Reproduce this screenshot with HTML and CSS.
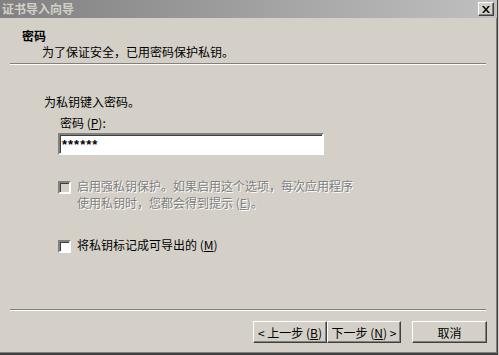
FILE: index.html
```html
<html>
<head>
    <meta charset="UTF-8"/>
    <title>证书导入向导</title>
    <link rel="stylesheet" href="styles.css">
</head>
<body>
<div class="window">
    <div class="titlebar">
        <span class="title">证书导入向导</span>
        <button class="btn_close">
            <svg width="8" height="7" viewBox="0 0 8 7"><path d="M0 0h2l2 2.5L6 0h2L5 3.5 8 7H6L4 4.5 2 7H0l3-3.5z" fill="#000"/></svg>
        </button>
    </div>
    <div class="header">
        <div class="head_title">密码</div>
        <div class="head_sub">为了保证安全，已用密码保护私钥。</div>
    </div>
    <div class="sep"></div>
    <div class="content">
        <div class="prompt">为私钥键入密码。</div>
        <div class="field">
            <label class="lbl">密码 (<u>P</u>):</label>
            <div class="pwd">******</div>
        </div>
        <div class="check disabled">
            <span class="box"></span>
            <span class="check_text">启用强私钥保护。如果启用这个选项，每次应用程序<br>使用私钥时，您都会得到提示 (<u>E</u>)。</span>
        </div>
        <div class="check">
            <span class="box"></span>
            <span class="check_text">将私钥标记成可导出的 (<u>M</u>)</span>
        </div>
    </div>
    <div class="sep"></div>
    <div class="footer">
        <button class="btn">&lt; 上一步 (<u>B</u>)</button>
        <button class="btn">下一步 (<u>N</u>) &gt;</button>
        <button class="btn btn_cancel">取消</button>
    </div>
</div>
</body>
</html>
```

FILE: styles.css
```css
body {
    margin: 0;
    font-family: "Noto Sans CJK SC", "Liberation Sans", sans-serif;
    font-size: 12px;
    background: #d4d0c8;
}

.window {
    width: 497px;
    height: 353px;
    background: #d4d0c8;
    border-right: 1px solid #404040;
    border-bottom: 2px solid #404040;
    box-shadow: inset -1px -1px 0 #808080;
    display: flex;
    flex-direction: column;
    overflow: hidden;
}

.titlebar {
    height: 18px;
    flex: none;
    display: flex;
    align-items: center;
    justify-content: space-between;
    padding: 0 3px 0 2px;
    background: linear-gradient(to right, #808080, #c0c0c0);
}

.title {
    color: #d4d0c8;
    font-weight: bold;
    line-height: 18px;
}

.btn_close {
    width: 16px;
    height: 14px;
    padding: 0;
    margin: 0;
    display: flex;
    align-items: center;
    justify-content: center;
    background: #d4d0c8;
    border: 1px solid;
    border-color: #fff #404040 #404040 #fff;
    box-shadow: inset -1px -1px 0 #808080;
}

.header {
    height: 45px;
    flex: none;
    padding-left: 22px;
    box-sizing: border-box;
    padding-top: 10px;
}

.head_title {
    font-weight: bold;
    line-height: 15px;
    color: #000;
}

.head_sub {
    padding-left: 20px;
    line-height: 17px;
}

.sep {
    margin: 0 11px 0 10px;
    height: 0;
    border-top: 1px solid #808080;
    border-bottom: 1px solid #fff;
    flex: none;
}

.content {
    flex: 1;
    padding: 29px 0 0 44px;
}

.prompt {
    line-height: 16px;
}

.field {
    margin: 5px 0 0 14px;
}

.lbl {
    display: block;
    line-height: 16px;
    padding-left: 2px;
}

.pwd {
    width: 260px;
    height: 18px;
    margin-top: 2px;
    background: #fff;
    border: 2px solid;
    border-color: #808080 #fff #fff #808080;
    box-shadow: inset 1px 1px 0 #404040;
    font-family: "Liberation Sans", sans-serif;
    font-weight: bold;
    font-size: 13px;
    line-height: 20px;
    padding-left: 2px;
    letter-spacing: 1px;
}

.check {
    display: flex;
    align-items: flex-start;
    margin: 22px 0 0 14px;
}

.check + .check {
    margin-top: 25px;
}

.box {
    width: 9px;
    height: 9px;
    flex: none;
    margin-top: 4px;
    margin-right: 6px;
    background: #fff;
    border: 2px solid;
    border-color: #808080 #fff #fff #808080;
    box-shadow: inset 1px 1px 0 #404040;
}

.check_text {
    line-height: 17px;
}

.disabled .box {
    background: #d4d0c8;
}

.disabled .check_text {
    color: #808080;
    text-shadow: 1px 1px 0 #fff;
}

.footer {
    height: 42px;
    flex: none;
    display: flex;
    align-items: flex-start;
    padding: 10px 0 0 253px;
    box-sizing: border-box;
}

.btn {
    width: 74px;
    height: 22px;
    padding: 0;
    margin: 0;
    font-family: "Noto Sans CJK SC", "Liberation Sans", sans-serif;
    font-size: 12px;
    color: #000;
    background: #d4d0c8;
    border: 1px solid;
    border-color: #fff #404040 #404040 #fff;
    box-shadow: inset -1px -1px 0 #808080;
}

.btn_cancel {
    margin-left: 11px;
    width: 75px;
}
```
